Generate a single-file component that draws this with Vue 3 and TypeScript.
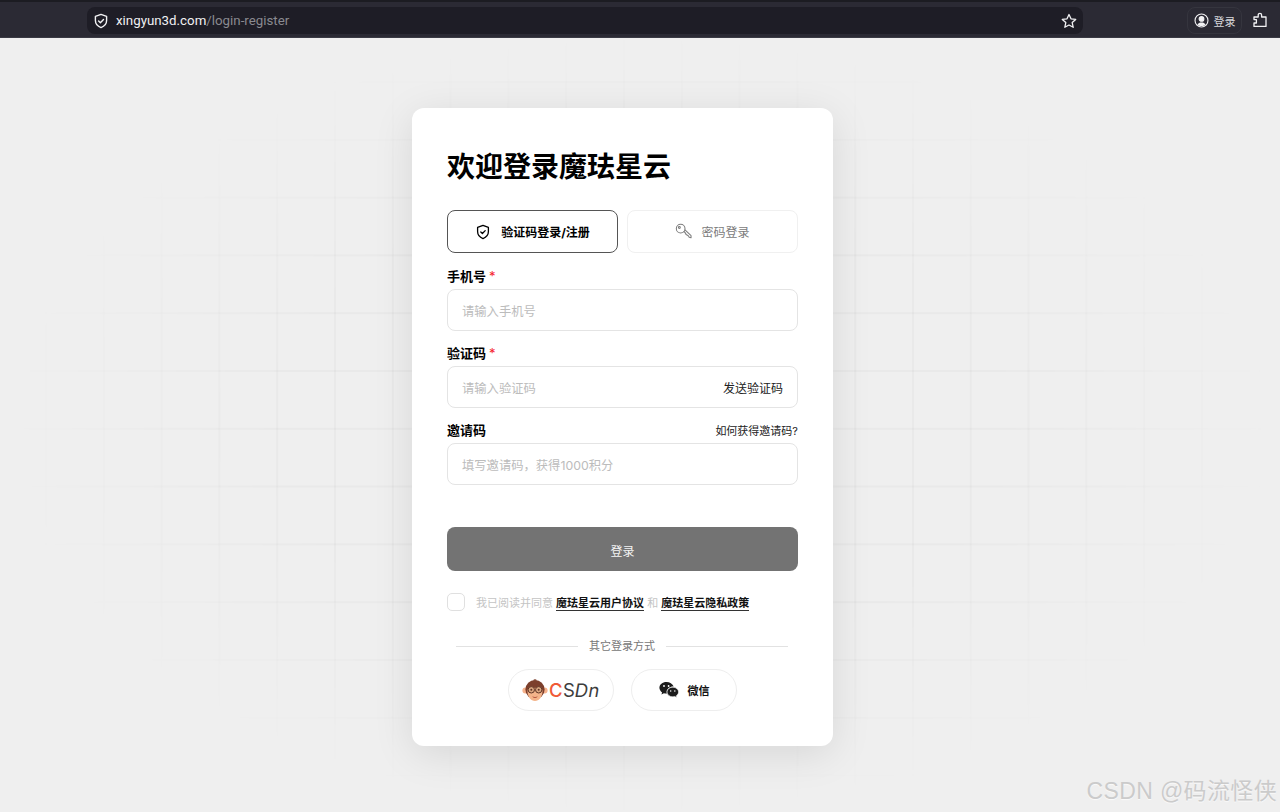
<script setup lang="ts">
import { ref } from "vue";

const phone = ref("");
const code = ref("");
const invite = ref("");
const agreed = ref(false);
const mode = ref("code");
</script>

<template>
    <div class="page">
        <header class="browser-bar">
            <div class="address">
                <svg class="addr-icon" viewBox="0 0 16 16" width="16" height="16" fill="none" stroke="#f2f2f4" stroke-width="1.4" stroke-linejoin="round" stroke-linecap="round">
                    <path d="M8 1.4 13.6 3.4V7.6C13.6 11 11.2 13.4 8 14.6 4.8 13.4 2.4 11 2.4 7.6V3.4Z" />
                    <path d="M5.6 8 7.4 9.7 10.5 6.4" />
                </svg>
                <span class="url">xingyun3d.com<span class="url-path">/login-register</span></span>
                <svg class="star" viewBox="0 0 16 16" width="16" height="16" fill="none" stroke="#f2f2f4" stroke-width="1.3" stroke-linejoin="round">
                    <path d="M8 1.5 10 5.8 14.7 6.4 11.2 9.6 12.2 14.3 8 12 3.8 14.3 4.8 9.6 1.3 6.4 6 5.8Z" />
                </svg>
            </div>
            <div class="profile">
                <svg viewBox="0 0 16 16" width="15" height="15" fill="none" stroke="#f2f2f4" stroke-width="1.2">
                    <circle cx="8" cy="8" r="6.9" />
                    <circle cx="8" cy="6.3" r="2.5" fill="#f2f2f4" />
                    <path d="M3.6 12.4C4.6 10.6 6 10 8 10S11.4 10.6 12.4 12.4C11 14.2 5 14.2 3.6 12.4Z" fill="#f2f2f4" stroke="none" />
                </svg>
                <span>登录</span>
            </div>
            <svg class="puzzle" viewBox="0 0 16 16" width="16" height="16" fill="none" stroke="#f2f2f4" stroke-width="1.3" stroke-linejoin="round">
                <path d="M2 14.4V11H4.4V7.6H2V5H6.2V3C6.2 .8 9.6 .8 9.6 3V5H14V14.4Z" />
            </svg>
        </header>

        <main class="content">
            <div class="card">
                <h1>欢迎登录魔珐星云</h1>

                <div class="tabs">
                    <button class="tab" :class="{ active: mode === 'code' }" @click="mode = 'code'">
                        <svg viewBox="0 0 16 16" width="16" height="16" fill="none" stroke="currentColor" stroke-width="1.3" stroke-linejoin="round" stroke-linecap="round">
                            <path d="M8 1.4 13.4 3.4V7.6C13.4 11 11.2 13.4 8 14.6 4.8 13.4 2.6 11 2.6 7.6V3.4Z" />
                            <path d="M5.8 8 7.4 9.5 10.2 6.6" />
                        </svg>
                        <span>验证码登录/注册</span>
                    </button>
                    <button class="tab" :class="{ active: mode === 'password' }" @click="mode = 'password'">
                        <svg viewBox="0 0 18 18" width="17" height="17" fill="none" stroke="currentColor" stroke-width="1.1" stroke-linejoin="round" stroke-linecap="round">
                            <circle cx="6" cy="6" r="4.6" />
                            <circle cx="4.6" cy="4.8" r="1" />
                            <path d="M9.4 9 11 10.4 11 11.6 12.4 11.8 12.8 13.2 14.2 13.4 15 15 17 15.6 17 13.4 10.6 7.4" />
                        </svg>
                        <span>密码登录</span>
                    </button>
                </div>

                <div class="field">
                    <label>手机号<em>*</em></label>
                    <div class="input-box">
                        <input v-model="phone" placeholder="请输入手机号" />
                    </div>
                </div>

                <div class="field">
                    <label>验证码<em>*</em></label>
                    <div class="input-box">
                        <input v-model="code" placeholder="请输入验证码" />
                        <a class="send">发送验证码</a>
                    </div>
                </div>

                <div class="field">
                    <div class="label-row">
                        <label>邀请码</label>
                        <a class="how">如何获得邀请码?</a>
                    </div>
                    <div class="input-box">
                        <input v-model="invite" placeholder="填写邀请码，获得1000积分" />
                    </div>
                </div>

                <button class="submit">登录</button>

                <div class="agree">
                    <span class="check" :class="{ on: agreed }" @click="agreed = !agreed"></span>
                    <span class="agree-text">我已阅读并同意 <a>魔珐星云用户协议</a> 和 <a>魔珐星云隐私政策</a></span>
                </div>

                <div class="divider"><span>其它登录方式</span></div>

                <div class="socials">
                    <button class="social">
                        <svg viewBox="0 0 26 24" width="26" height="24">
                            <circle cx="3.4" cy="12.5" r="3" fill="#f6b28c" />
                            <circle cx="22.6" cy="12.5" r="3" fill="#f6b28c" />
                            <ellipse cx="13" cy="11.5" rx="9.6" ry="9.6" fill="#7c3f2c" />
                            <path d="M11 2.5C12 .8 14 .8 15 2.5Z" fill="#7c3f2c" />
                            <path d="M5.5 13C5.5 9.5 9 8.6 13 10 17 8.6 20.5 9.5 20.5 13 20.5 19 17 23 13 23S5.5 19 5.5 13Z" fill="#f4b48a" />
                            <circle cx="9.3" cy="11.8" r="3.2" fill="#dba680" stroke="#5e3526" stroke-width="1" />
                            <circle cx="16.7" cy="11.8" r="3.2" fill="#dba680" stroke="#5e3526" stroke-width="1" />
                            <circle cx="9.3" cy="11.8" r="1" fill="#5e3526" />
                            <circle cx="16.7" cy="11.8" r="1" fill="#5e3526" />
                            <path d="M11 19C12 19.8 14 19.8 15 19" fill="none" stroke="#b5573f" stroke-width="1" stroke-linecap="round" />
                        </svg>
                        <span class="csdn"><b>C</b>S<span class="slant">Dn</span></span>
                    </button>
                    <button class="social wechat">
                        <svg viewBox="0 0 20 18" width="20" height="18" fill="#1c1c1c">
                            <path d="M7.4 1C3.5 1 .4 3.6 .4 6.8c0 1.9 1.1 3.5 2.7 4.6l-.7 2.1 2.5-1.3c.8.2 1.6.4 2.5.4h.6c-.2-.5-.3-1.1-.3-1.6 0-3.1 2.9-5.5 6.5-5.5h.5C13.6 2.9 10.8 1 7.4 1Z" />
                            <path d="M19.6 11c0-2.7-2.6-4.8-5.8-4.8S8 8.3 8 11s2.6 4.8 5.8 4.8c.7 0 1.3-.1 2-.3l2 1.1-.5-1.8c1.4-1 2.3-2.3 2.3-3.8Z" stroke="#fff" stroke-width=".6" />
                            <circle cx="5" cy="5" r=".9" fill="#fff" />
                            <circle cx="9.6" cy="5" r=".9" fill="#fff" />
                            <circle cx="11.7" cy="10" r=".75" fill="#fff" />
                            <circle cx="15.8" cy="10" r=".75" fill="#fff" />
                        </svg>
                        <span>微信</span>
                    </button>
                </div>
            </div>
        </main>

        <div class="watermark">CSDN @码流怪侠</div>
    </div>
</template>

<style>
html,
body {
    margin: 0;
    background: #efefef;
}
</style>

<style scoped>
.page {
    position: relative;
    width: 1280px;
    height: 812px;
    overflow: hidden;
    background: #efefef;
    font-family: "Inter", "Noto Sans CJK SC", sans-serif;
    color: #000;
}

.browser-bar {
    height: 38px;
    box-sizing: border-box;
    padding: 6px 10px 0 87px;
    display: flex;
    align-items: flex-start;
    background: #2b2a34;
    border-top: 2px solid #1c1c22;
    border-bottom: 1px solid #3a3a44;
}

.address {
    width: 996px;
    height: 27px;
    box-sizing: border-box;
    margin-top: -1px;
    padding: 0 6px 0 6px;
    display: flex;
    align-items: center;
    background: #1e1d26;
    border-radius: 8px;
    font-family: "Roboto", "Noto Sans CJK SC", sans-serif;
}

.addr-icon {
    flex: none;
}

.url {
    margin-left: 7px;
    font-size: 13.3px;
    color: #f0f0f2;
    flex: 1;
}

.url-path {
    color: #8a8a90;
}

.star {
    flex: none;
}

.profile {
    margin-left: 104px;
    margin-top: -1px;
    width: 55px;
    height: 27px;
    box-sizing: border-box;
    display: flex;
    align-items: center;
    justify-content: center;
    gap: 5px;
    border: 1px solid #35353e;
    border-radius: 8px;
    font-size: 11px;
    color: #d8d8dc;
}

.puzzle {
    margin-left: 10px;
    margin-top: 4px;
}

.content {
    position: relative;
    padding: 70px 35px 0 0;
    display: flex;
    justify-content: center;
    height: 774px;
    box-sizing: border-box;
}

/* faint grid behind the card, fades out to the edges */
.content::before {
    content: "";
    position: absolute;
    inset: 0;
    background-image:
        linear-gradient(to right, rgba(0, 0, 0, 0.025) 1.5px, transparent 1.5px),
        linear-gradient(to bottom, rgba(0, 0, 0, 0.025) 1.5px, transparent 1.5px);
    background-size: 57.8px 57.8px;
    background-position: 45px 43px;
    -webkit-mask-image: radial-gradient(ellipse 640px 400px at 50% 50%, #000 55%, transparent 100%);
    mask-image: radial-gradient(ellipse 640px 400px at 50% 50%, #000 55%, transparent 100%);
}

.card {
    position: relative;
    width: 421px;
    height: 638px;
    box-sizing: border-box;
    padding: 35px;
    background: #fff;
    border-radius: 12px;
    box-shadow: 0 8px 40px rgba(0, 0, 0, 0.1);
}

h1 {
    margin: 0 0 18px;
    font-size: 28px;
    line-height: 49px;
    font-weight: 700;
}

.tabs {
    display: flex;
    gap: 9px;
    margin-bottom: 13px;
}

.tab {
    flex: 1;
    height: 43px;
    display: flex;
    align-items: center;
    justify-content: center;
    gap: 9px;
    padding: 0;
    background: #fff;
    border: 1px solid #f0f0f0;
    border-radius: 8px;
    font-family: inherit;
    font-size: 12px;
    color: #7b7b7b;
    cursor: pointer;
}

.tab.active {
    gap: 10px;
    border-color: #555;
    color: #000;
    font-weight: 700;
}

.field {
    margin-bottom: 12px;
}

label {
    display: block;
    font-size: 13px;
    line-height: 20px;
    font-weight: 700;
}

label em {
    margin-left: 3px;
    color: #f5222d;
    font-style: normal;
    font-weight: 400;
}

.label-row {
    display: flex;
    justify-content: space-between;
    align-items: center;
}

.how {
    font-size: 11px;
    color: #222;
}

.input-box {
    height: 42px;
    box-sizing: border-box;
    margin-top: 3px;
    padding: 0 14px;
    display: flex;
    align-items: center;
    border: 1px solid #e4e4e4;
    border-radius: 8px;
    background: #fff;
}

.input-box input {
    flex: 1;
    min-width: 0;
    border: none;
    outline: none;
    padding: 2px 0 0;
    font-family: inherit;
    font-size: 12.3px;
    background: transparent;
}

.input-box input::placeholder {
    color: #bcbcbc;
}

.send {
    font-size: 12px;
    color: #222;
}

.submit {
    display: block;
    width: 100%;
    height: 44px;
    margin-top: 42px;
    border: none;
    border-radius: 8px;
    background: #737373;
    color: #f4f4f4;
    font-family: inherit;
    font-size: 12px;
    padding-top: 4px;
}

.agree {
    display: flex;
    align-items: center;
    margin-top: 22px;
    height: 18px;
}

.check {
    width: 18px;
    height: 18px;
    box-sizing: border-box;
    flex: none;
    border: 1px solid #e0e0e0;
    border-radius: 5px;
    cursor: pointer;
}

.agree-text {
    margin-left: 11px;
    font-size: 11px;
    color: #c4c4c4;
    white-space: nowrap;
}

.agree-text a {
    color: #111;
    font-weight: 700;
    border-bottom: 1px solid #333;
}

.divider {
    display: flex;
    align-items: center;
    gap: 11px;
    margin: 26px 10px 0 9px;
    font-size: 11px;
    line-height: 18px;
    color: #777;
}

.divider::before,
.divider::after {
    content: "";
    flex: 1;
    height: 1px;
    background: #e2e2e2;
}

.socials {
    display: flex;
    justify-content: center;
    gap: 17px;
    margin-top: 14px;
}

.social {
    width: 106px;
    height: 42px;
    display: flex;
    align-items: center;
    justify-content: center;
    gap: 1px;
    padding: 0;
    background: #fff;
    border: 1px solid #eeeeee;
    border-radius: 21px;
    font-family: inherit;
    font-size: 11px;
    font-weight: 700;
    color: #111;
    cursor: pointer;
}

.social.wechat {
    gap: 9px;
}

.csdn {
    font-family: "Inter", sans-serif;
    font-size: 18.5px;
    font-weight: 400;
    letter-spacing: 0.3px;
    color: #3d3d3d;
}

.csdn b {
    font-weight: 500;
    color: #f05a36;
}

.slant {
    display: inline-block;
    transform: skewX(-10deg);
}

.watermark {
    position: absolute;
    right: 3px;
    bottom: 6px;
    font-family: "Liberation Sans", "Noto Sans CJK SC", sans-serif;
    font-size: 23px;
    line-height: 30px;
    letter-spacing: 0.35px;
    color: #cbcbcb;
    text-shadow: 0 1px 1px rgba(255, 255, 255, 0.7);
    pointer-events: none;
}
</style>
